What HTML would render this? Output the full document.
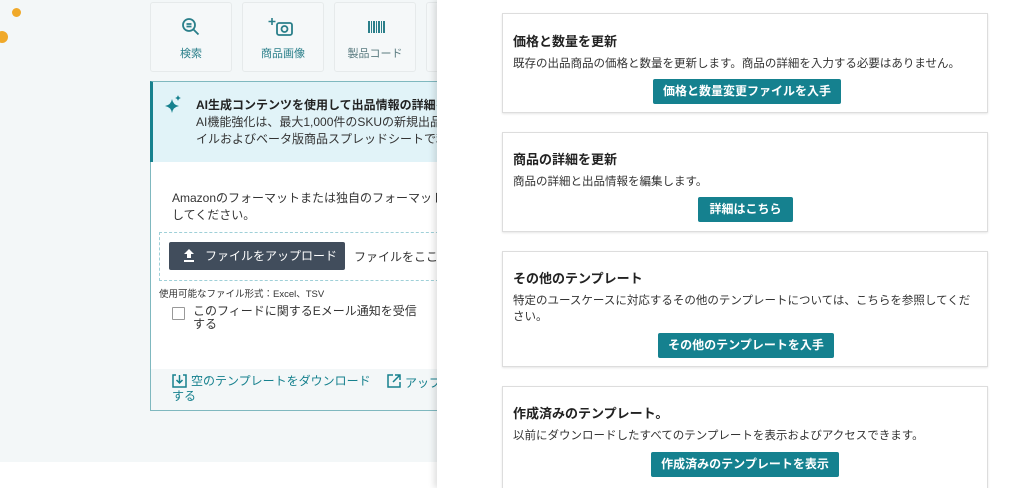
<!DOCTYPE html>
<html><head><meta charset="utf-8"><style>
*{box-sizing:border-box;margin:0;padding:0}
html,body{width:1024px;height:488px;overflow:hidden}
body{background:#fff;font-family:"Liberation Sans","Noto Sans CJK JP",sans-serif;color:#333;position:relative}
.abs{position:absolute}
.left{left:0;top:0;width:437px;height:462px;background:#f3f7f8}
.dot{border-radius:50%;background:#f0a92a}
.tile{top:2px;width:82px;height:70px;border:1px solid #e6eaeb;background:#f5f8f9;border-radius:3px;text-align:center;font-size:11px;color:#2a7f8a}
.tile .lbl{position:absolute;left:0;right:0;top:42px}
.card{left:502px;width:486px;border:1px solid #ddd;background:#fff;box-shadow:0 1px 2px rgba(0,0,0,.1)}
.card h3{position:absolute;left:10px;font-size:13px;font-weight:bold;color:#222}
.card p{position:absolute;left:10px;right:10px;font-size:11.5px;color:#333;line-height:16px}
.btn{position:absolute;background:#15818f;color:#fff;font-weight:bold;font-size:12px;text-align:center;line-height:25px;height:25px;border-radius:2px}
</style></head><body>
<div class="abs left"></div>
<div class="abs dot" style="left:12px;top:8px;width:9px;height:9px"></div>
<div class="abs dot" style="left:-4px;top:31px;width:12px;height:12px"></div>
<div class="abs tile" style="left:150px"><svg class="abs" style="left:30px;top:14px" width="20" height="20" viewBox="0 0 20 20" fill="none" stroke="#2a7f8a" stroke-width="1.8"><circle cx="8" cy="8" r="6"/><path d="M12.5 12.5l5 5M5.5 7h5M5.5 9.5h5"/></svg><div class="lbl">検索</div></div>
<div class="abs tile" style="left:242px"><svg class="abs" style="left:24px;top:14px" width="28" height="20" viewBox="0 0 28 20" fill="none" stroke="#2a7f8a" stroke-width="1.8"><path d="M5 1v7M1.5 4.5h7" stroke-width="1.6"/><rect x="10" y="6" width="15" height="12" rx="2"/><circle cx="17.5" cy="12" r="3"/></svg><div class="lbl">商品画像</div></div>
<div class="abs tile" style="left:334px"><svg class="abs" style="left:33px;top:18px" width="17" height="12" viewBox="0 0 17 12" fill="#2a7f8a"><rect x="0" width="2" height="12"/><rect x="3" width="1" height="12"/><rect x="5" width="2" height="12"/><rect x="8" width="1" height="12"/><rect x="10" width="2" height="12"/><rect x="13" width="1" height="12"/><rect x="15" width="2" height="12"/></svg><div class="lbl" style="color:#5a7b80">製品コード</div></div>
<div class="abs tile" style="left:426px;width:20px"></div>
<div class="abs" style="left:150px;top:81px;width:290px;height:330px;border:1px solid #7fb8bf;background:#fff"></div>
<div class="abs" style="left:150px;top:81px;width:290px;height:81px;background:#e1f3f8;border-left:3px solid #16818e;border-top:1px solid #7fb8bf"></div>
<svg class="abs" style="left:165px;top:95px" width="18" height="18" viewBox="0 0 18 18" fill="#16818e"><path d="M7 4Q8 10 14 11Q8 12 7 18Q6 12 0 11Q6 10 7 4Z"/><path d="M13 0Q13.5 2.5 16 3Q13.5 3.5 13 6Q12.5 3.5 10 3Q12.5 2.5 13 0Z"/></svg>
<div class="abs" style="left:196px;top:96px;font-size:12px;font-weight:bold;color:#222;white-space:nowrap">AI生成コンテンツを使用して出品情報の詳細を</div>
<div class="abs" style="left:196px;top:114px;font-size:12px;line-height:17px;color:#333;white-space:nowrap">AI機能強化は、最大1,000件のSKUの新規出品で<br>イルおよびベータ版商品スプレッドシートで利</div>
<div class="abs" style="left:172px;top:190px;font-size:12px;line-height:17px;color:#333;white-space:nowrap">Amazonのフォーマットまたは独自のフォーマットで<br>してください。</div>
<div class="abs" style="left:159px;top:232px;width:290px;height:49px;border:1px dashed #9fd0d8"></div>
<div class="abs" style="left:169px;top:242px;width:176px;height:28px;background:#414d5c;border-radius:2px;color:#fff;font-size:12px;line-height:28px;padding-left:36px">ファイルをアップロード</div>
<svg class="abs" style="left:183px;top:249px" width="12" height="13" viewBox="0 0 12 13" fill="#fff"><path d="M6 0L11 5H8V9H4V5H1Z"/><rect x="1" y="11" width="10" height="2"/></svg>
<div class="abs" style="left:354px;top:248px;font-size:12px;color:#333;white-space:nowrap">ファイルをここに</div>
<div class="abs" style="left:159px;top:286px;font-size:9.5px;color:#333;white-space:nowrap">使用可能なファイル形式：Excel、TSV</div>
<div class="abs" style="left:172px;top:307px;width:13px;height:13px;border:1px solid #999;background:#fff;border-radius:1px"></div>
<div class="abs" style="left:193px;top:305px;font-size:12px;line-height:13px;color:#333;white-space:nowrap">このフィードに関するEメール通知を受信<br>する</div>
<div class="abs" style="left:151px;top:369px;width:289px;height:41px;background:#f3f7f8"></div>
<svg class="abs" style="left:172px;top:374px" width="15" height="14" viewBox="0 0 15 14" fill="none" stroke="#16818e" stroke-width="1.5"><path d="M4 1H1V13H14V1H11M7.5 1V9M4.5 6L7.5 9L10.5 6"/></svg>
<div class="abs" style="left:191px;top:374px;font-size:12px;line-height:14px;color:#16818e;white-space:nowrap">空のテンプレートをダウンロード</div>
<div class="abs" style="left:172px;top:389px;font-size:12px;line-height:14px;color:#16818e;white-space:nowrap">する</div>
<svg class="abs" style="left:387px;top:374px" width="14" height="14" viewBox="0 0 14 14" fill="none" stroke="#16818e" stroke-width="1.5"><path d="M6 1H1V13H13V8M8 1H13V6M13 1L6 8"/></svg>
<div class="abs" style="left:405px;top:374px;font-size:12px;color:#16818e;white-space:nowrap">アップ</div>
<div class="abs" style="left:437px;top:0;width:587px;height:488px;background:#fff;box-shadow:-3px 0 6px rgba(0,0,0,.12)"></div>
<div class="abs card" style="top:13px;height:100px"><h3 style="top:17px">価格と数量を更新</h3><p style="top:42px">既存の出品商品の価格と数量を更新します。商品の詳細を入力する必要はありません。</p><div class="btn" style="left:150px;top:65px;width:188px">価格と数量変更ファイルを入手</div></div>
<div class="abs card" style="top:132px;height:100px"><h3 style="top:16px">商品の詳細を更新</h3><p style="top:41px">商品の詳細と出品情報を編集します。</p><div class="btn" style="left:195px;top:64px;width:95px">詳細はこちら</div></div>
<div class="abs card" style="top:251px;height:116px"><h3 style="top:16px">その他のテンプレート</h3><p style="top:41px">特定のユースケースに対応するその他のテンプレートについては、こちらを参照してください。</p><div class="btn" style="left:155px;top:81px;width:176px">その他のテンプレートを入手</div></div>
<div class="abs card" style="top:386px;height:110px"><h3 style="top:16px">作成済みのテンプレート。</h3><p style="top:41px">以前にダウンロードしたすべてのテンプレートを表示およびアクセスできます。</p><div class="btn" style="left:148px;top:65px;width:188px">作成済みのテンプレートを表示</div></div>
</body></html>
